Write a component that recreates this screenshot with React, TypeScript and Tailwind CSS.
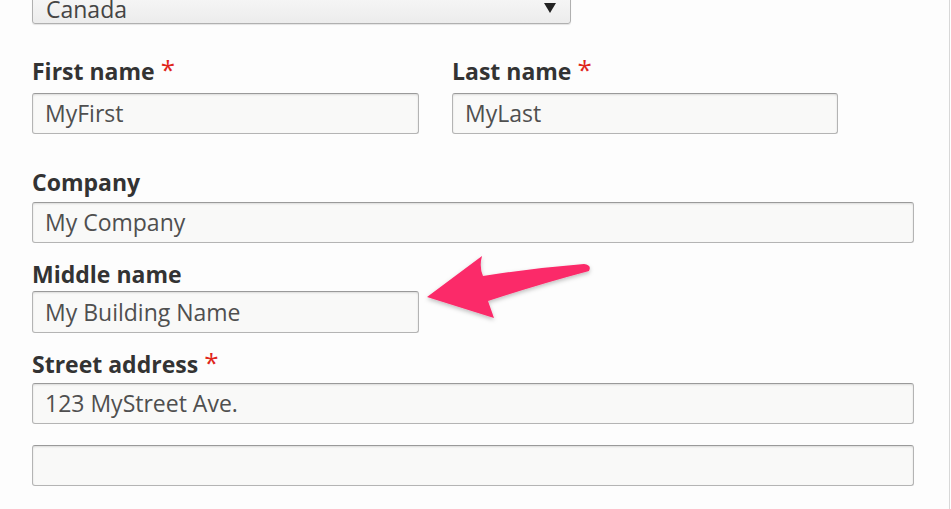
import React from 'react';

const font = { fontFamily: '"Open Sans", "DejaVu Sans", sans-serif' };

const Label = ({ text, required, className = '' }: { text: string; required?: boolean; className?: string }) => (
  <div className={`flex items-start text-[23px] leading-[28px] font-bold text-[#333] ${className}`}>
    <span>{text}</span>
    {required && <span className="ml-[6px] text-[#e0261b] text-[26px] leading-[24px] font-normal">*</span>}
  </div>
);

const Field = ({ value, className = '' }: { value?: string; className?: string }) => (
  <div
    className={`h-[41px] flex items-center px-[12px] rounded-[3px] border border-[#b4b4b4] border-t-[#9a9a9a] bg-[#f9f9f8] shadow-[inset_0_1px_2px_rgba(0,0,0,0.12)] text-[23px] text-[#4f4f4f] ${className}`}
  >
    {value}
  </div>
);

const Arrow = () => (
  <svg className="absolute left-[420px] top-[250px]" width="180" height="80" viewBox="420 250 180 80">
    <defs>
      <filter id="sh" x="-20%" y="-20%" width="140%" height="160%">
        <feDropShadow dx="0" dy="2" stdDeviation="2" floodColor="#000" floodOpacity="0.25" />
      </filter>
    </defs>
    <path
      d="M427 297 L482 256 Q479 267 483 276 Q533 268 584 264 Q592 265 589 271 Q540 284 488 301 L494 318 Z"
      fill="#fb2a69"
      filter="url(#sh)"
    />
  </svg>
);

export default function App() {
  return (
    <div className="relative w-[951px] h-[509px] overflow-hidden bg-white" style={font}>
      <div className="w-[950px] h-full bg-[#fdfdfd] border-r border-[#d8d8d8] pl-[32px] flex flex-col">
        {/* country select */}
        <div className="-mt-[17px] w-[539px] h-[41px] shrink-0 flex items-end justify-between pl-[13px] pr-[14px] rounded-[3px] border border-[#b0b0b0] bg-gradient-to-b from-[#fbfbfb] to-[#ececec] shadow-[0_1px_1px_rgba(0,0,0,0.1)] text-[23px] leading-[27px] text-[#444]">
          <span>Canada</span>
          <svg className="mb-[10px]" width="12" height="10" viewBox="0 0 12 10">
            <path d="M0 0 H12 L6 10 Z" fill="#222" />
          </svg>
        </div>

        <div className="mt-[33px] flex gap-[33px]">
          <div className="w-[387px]">
            <Label text="First name" required className="mb-[8px]" />
            <Field value="MyFirst" />
          </div>
          <div className="w-[386px]">
            <Label text="Last name" required className="mb-[8px]" />
            <Field value="MyLast" />
          </div>
        </div>

        <Label text="Company" className="mt-[34px] mb-[6px]" />
        <Field value="My Company" className="w-[882px]" />

        <Label text="Middle name" className="mt-[17px] mb-[3px]" />
        <Field value="My Building Name" className="w-[387px] h-[42px]" />

        <Label text="Street address" required className="mt-[17px] mb-[5px]" />
        <Field value="123 MyStreet Ave." className="w-[882px]" />

        <Field className="w-[882px] mt-[21px]" />
      </div>
      <Arrow />
    </div>
  );
}
